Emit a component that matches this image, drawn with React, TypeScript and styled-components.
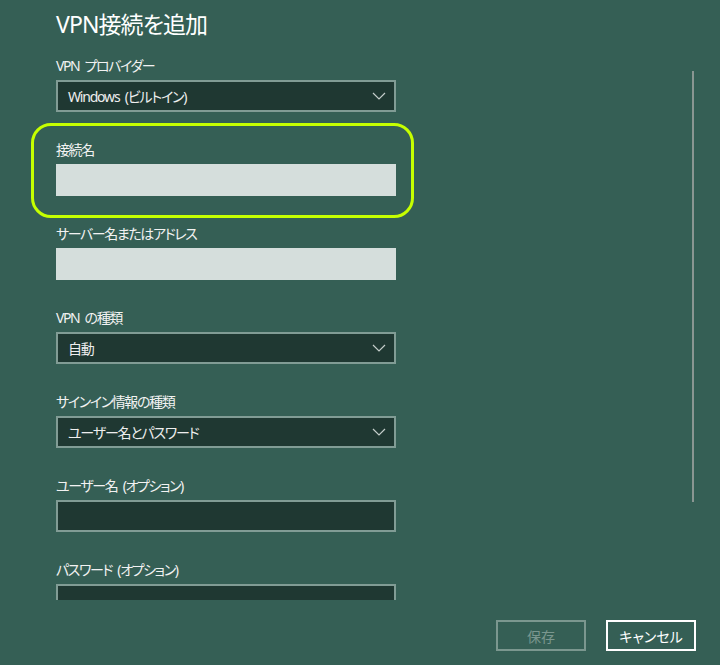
import styled, { createGlobalStyle } from "styled-components";

const GlobalStyle = createGlobalStyle`
    html, body {
        margin: 0;
        padding: 0;
        background: #355f55;
    }
    body {
        font-family: "Noto Sans", "Noto Sans CJK JP", sans-serif;
        font-feature-settings: "palt";
        color: #ffffff;
    }
`;

const Page = styled.div`
    width: 720px;
    height: 665px;
    background: #355f55;
    display: flex;
    flex-direction: column;
    overflow: hidden;
`;

const Title = styled.h1`
    margin: 0;
    padding: 8px 0 0 56px;
    height: 40px;
    box-sizing: border-box;
    font-size: 23px;
    line-height: 32px;
    font-weight: 400;
    color: #ffffff;
    letter-spacing: -0.9px;
`;

const ScrollArea = styled.div`
    height: 560px;
    display: flex;
    overflow: hidden;
`;

const Form = styled.div`
    width: 340px;
    padding: 16px 0 0 56px;
    display: flex;
    flex-direction: column;
    gap: 28px;
`;

const Scrollbar = styled.div`
    width: 2px;
    height: 431px;
    margin: 31px 26px 0 auto;
    background: #8a9692;
`;

const Field = styled.div<{ $highlight?: boolean }>`
    position: relative;
    display: flex;
    flex-direction: column;
    gap: 4px;

    ${(p) =>
        p.$highlight &&
        `
        &::after {
            content: "";
            position: absolute;
            top: -17px;
            left: -25px;
            right: -18px;
            bottom: -22px;
            border: 3px solid #c6ff00;
            border-radius: 20px;
            pointer-events: none;
        }
    `}
`;

const Label = styled.label`
    font-size: 14px;
    line-height: 20px;
    color: #f2f2f2;
    white-space: nowrap;
    letter-spacing: -1.4px;
    word-spacing: 3px;
`;

const Select = styled.div`
    height: 32px;
    box-sizing: border-box;
    border: 2px solid #819c95;
    background: #1f3832;
    display: flex;
    align-items: center;
    justify-content: space-between;
    padding: 0 8px 0 10px;
    font-size: 14px;
    color: #eeeeee;
    letter-spacing: -1.2px;
    word-spacing: 3px;
`;

const TextBox = styled.div<{ $light?: boolean }>`
    height: 32px;
    box-sizing: border-box;
    border: 2px solid ${(p) => (p.$light ? "#d5dedc" : "#819c95")};
    background: ${(p) => (p.$light ? "#d5dedc" : "#1f3832")};
`;

const Footer = styled.div`
    flex: 1;
    display: flex;
    justify-content: flex-end;
    align-items: flex-start;
    gap: 20px;
    padding: 20px 24px 0 0;
`;

const Button = styled.button<{ $disabled?: boolean }>`
    width: 90px;
    height: 31px;
    box-sizing: border-box;
    background: transparent;
    border: 2px solid ${(p) => (p.$disabled ? "#7b978f" : "#ffffff")};
    color: ${(p) => (p.$disabled ? "#7b978f" : "#ffffff")};
    font-family: inherit;
    font-feature-settings: "palt";
    font-size: 14px;
    padding: 0;
`;

function Chevron() {
    return (
        <svg width="14" height="8" viewBox="0 0 14 8">
            <polyline points="1,1 7,7 13,1" fill="none" stroke="#c4cdca" strokeWidth="1.2" />
        </svg>
    );
}

export default function App() {
    return (
        <Page>
            <GlobalStyle />
            <Title>VPN接続を追加</Title>
            <ScrollArea>
                <Form>
                    <Field>
                        <Label>VPN プロバイダー</Label>
                        <Select>
                            <span>Windows (ビルトイン)</span>
                            <Chevron />
                        </Select>
                    </Field>
                    <Field $highlight>
                        <Label>接続名</Label>
                        <TextBox $light />
                    </Field>
                    <Field>
                        <Label>サーバー名またはアドレス</Label>
                        <TextBox $light />
                    </Field>
                    <Field>
                        <Label>VPN の種類</Label>
                        <Select>
                            <span>自動</span>
                            <Chevron />
                        </Select>
                    </Field>
                    <Field>
                        <Label>サインイン情報の種類</Label>
                        <Select>
                            <span>ユーザー名とパスワード</span>
                            <Chevron />
                        </Select>
                    </Field>
                    <Field>
                        <Label>ユーザー名 (オプション)</Label>
                        <TextBox />
                    </Field>
                    <Field>
                        <Label>パスワード (オプション)</Label>
                        <TextBox />
                    </Field>
                </Form>
                <Scrollbar />
            </ScrollArea>
            <Footer>
                <Button $disabled>保存</Button>
                <Button>キャンセル</Button>
            </Footer>
        </Page>
    );
}
